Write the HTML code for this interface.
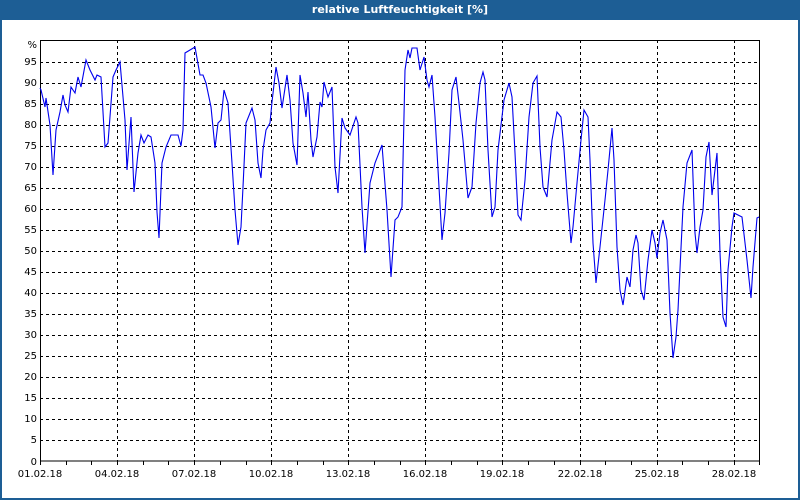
<!DOCTYPE html>
<html><head><style>
html,body{margin:0;padding:0;background:#fff;width:800px;height:500px;overflow:hidden}
.frame{position:absolute;left:0;top:0;width:796px;height:498px;border:2px solid #1d5e95;border-top:none}
.title{position:absolute;left:0;top:0;width:800px;height:20px;background:#1d5e95;color:#fff;font:bold 11px "DejaVu Sans","Liberation Sans",sans-serif;text-align:center;line-height:19px}
svg{position:absolute;left:0;top:0}
text{font-family:"DejaVu Sans","Liberation Sans",sans-serif;font-size:10px;fill:#000}
</style></head><body>
<div class="frame"></div>
<div class="title">relative Luftfeuchtigkeit [%]</div>
<svg width="800" height="500" xmlns="http://www.w3.org/2000/svg">
<g stroke="#000" stroke-width="1" stroke-dasharray="3,3" shape-rendering="crispEdges">
<path d="M40 440.5H760M40 419.5H760M40 398.5H760M40 377.5H760M40 356.5H760M40 335.5H760M40 314.5H760M40 293.5H760M40 272.5H760M40 251.5H760M40 230.5H760M40 209.5H760M40 188.5H760M40 167.5H760M40 146.5H760M40 125.5H760M40 104.5H760M40 83.5H760M40 62.5H760"/>
<path d="M117.5 40V461M194.5 40V461M271.5 40V461M348.5 40V461M425.5 40V461M502.5 40V461M580.5 40V461M657.5 40V461M734.5 40V461"/>
</g>
<g stroke="#000" stroke-width="1" shape-rendering="crispEdges" fill="none">
<rect x="40.5" y="40.5" width="719" height="420.5"/>
<path d="M40.5 461V465M66.5 461V465M91.5 461V465M117.5 461V465M143.5 461V465M168.5 461V465M194.5 461V465M220.5 461V465M246.5 461V465M271.5 461V465M297.5 461V465M323.5 461V465M348.5 461V465M374.5 461V465M400.5 461V465M425.5 461V465M451.5 461V465M477.5 461V465M502.5 461V465M528.5 461V465M554.5 461V465M580.5 461V465M605.5 461V465M631.5 461V465M657.5 461V465M682.5 461V465M708.5 461V465M734.5 461V465M759.5 461V465"/>
</g>
<polyline fill="none" stroke="#0000ee" stroke-width="1.1" points="40,88 41,90 45,107 46,98 50,125 53,175 56,130 60,112 63,95 65,105 68,112 71,87 75,93 78,77 81,87 86,60 90,70 95,80 97,75 101,77 105,147 108,143 113,77 116,70 120,62 125,120 127,170 131,117 134,192 138,153 141,135 144,143 148,135 151,137 155,163 157,212 159,238 162,163 166,147 171,135 178,135 181,146 183,130 185,53 190,50 195,47 200,75 203,75 206,83 211,107 215,148 218,123 221,120 224,90 228,103 232,163 235,210 238,245 241,227 243,187 246,123 252,108 255,120 258,163 261,178 263,150 266,130 270,123 272,102 276,67 279,83 282,108 287,75 290,100 293,143 297,165 300,75 303,93 306,117 308,92 311,140 313,157 317,137 320,102 322,107 324,82 328,97 332,87 335,167 338,193 342,118 345,128 350,135 356,117 358,123 362,207 365,253 370,183 375,163 382,145 387,210 391,277 395,220 398,217 402,207 405,70 408,50 410,58 412,48 417,48 420,70 424,57 427,80 429,87 432,75 435,117 439,187 442,240 445,213 449,153 452,90 456,77 459,103 463,140 468,198 472,187 476,123 480,83 483,72 485,80 488,150 492,217 495,207 498,150 504,100 509,83 512,97 515,153 518,215 521,220 525,180 529,117 533,83 537,76 540,147 543,187 547,197 552,140 557,112 561,117 564,150 567,193 571,243 573,227 577,183 581,140 584,110 588,117 590,160 593,243 596,283 600,247 605,200 608,170 612,128 614,160 617,247 620,290 623,305 627,277 630,287 633,250 636,235 638,243 641,290 644,300 648,260 652,230 655,243 657,258 660,233 663,220 667,240 670,313 673,358 676,337 678,310 683,207 687,163 692,150 695,233 697,253 700,227 703,210 706,157 709,142 712,195 717,153 720,253 723,317 726,327 728,270 732,227 734,213 742,217 747,260 751,298 753,267 757,218 759,217"/>
<g text-anchor="end">
<text x="37" y="48">%</text>
<text x="37" y="65">95</text><text x="37" y="86">90</text><text x="37" y="107">85</text><text x="37" y="128">80</text><text x="37" y="149">75</text><text x="37" y="170">70</text><text x="37" y="191">65</text><text x="37" y="212">60</text><text x="37" y="233">55</text><text x="37" y="254">50</text><text x="37" y="275">45</text><text x="37" y="296">40</text><text x="37" y="317">35</text><text x="37" y="338">30</text><text x="37" y="359">25</text><text x="37" y="380">20</text><text x="37" y="401">15</text><text x="37" y="422">10</text><text x="37" y="443">5</text><text x="37" y="465">0</text>
</g>
<g text-anchor="middle">
<text x="40" y="477">01.02.18</text><text x="117" y="477">04.02.18</text><text x="194" y="477">07.02.18</text><text x="271" y="477">10.02.18</text><text x="348" y="477">13.02.18</text><text x="425" y="477">16.02.18</text><text x="502" y="477">19.02.18</text><text x="580" y="477">22.02.18</text><text x="657" y="477">25.02.18</text><text x="734" y="477">28.02.18</text>
</g>
</svg>
</body></html>
